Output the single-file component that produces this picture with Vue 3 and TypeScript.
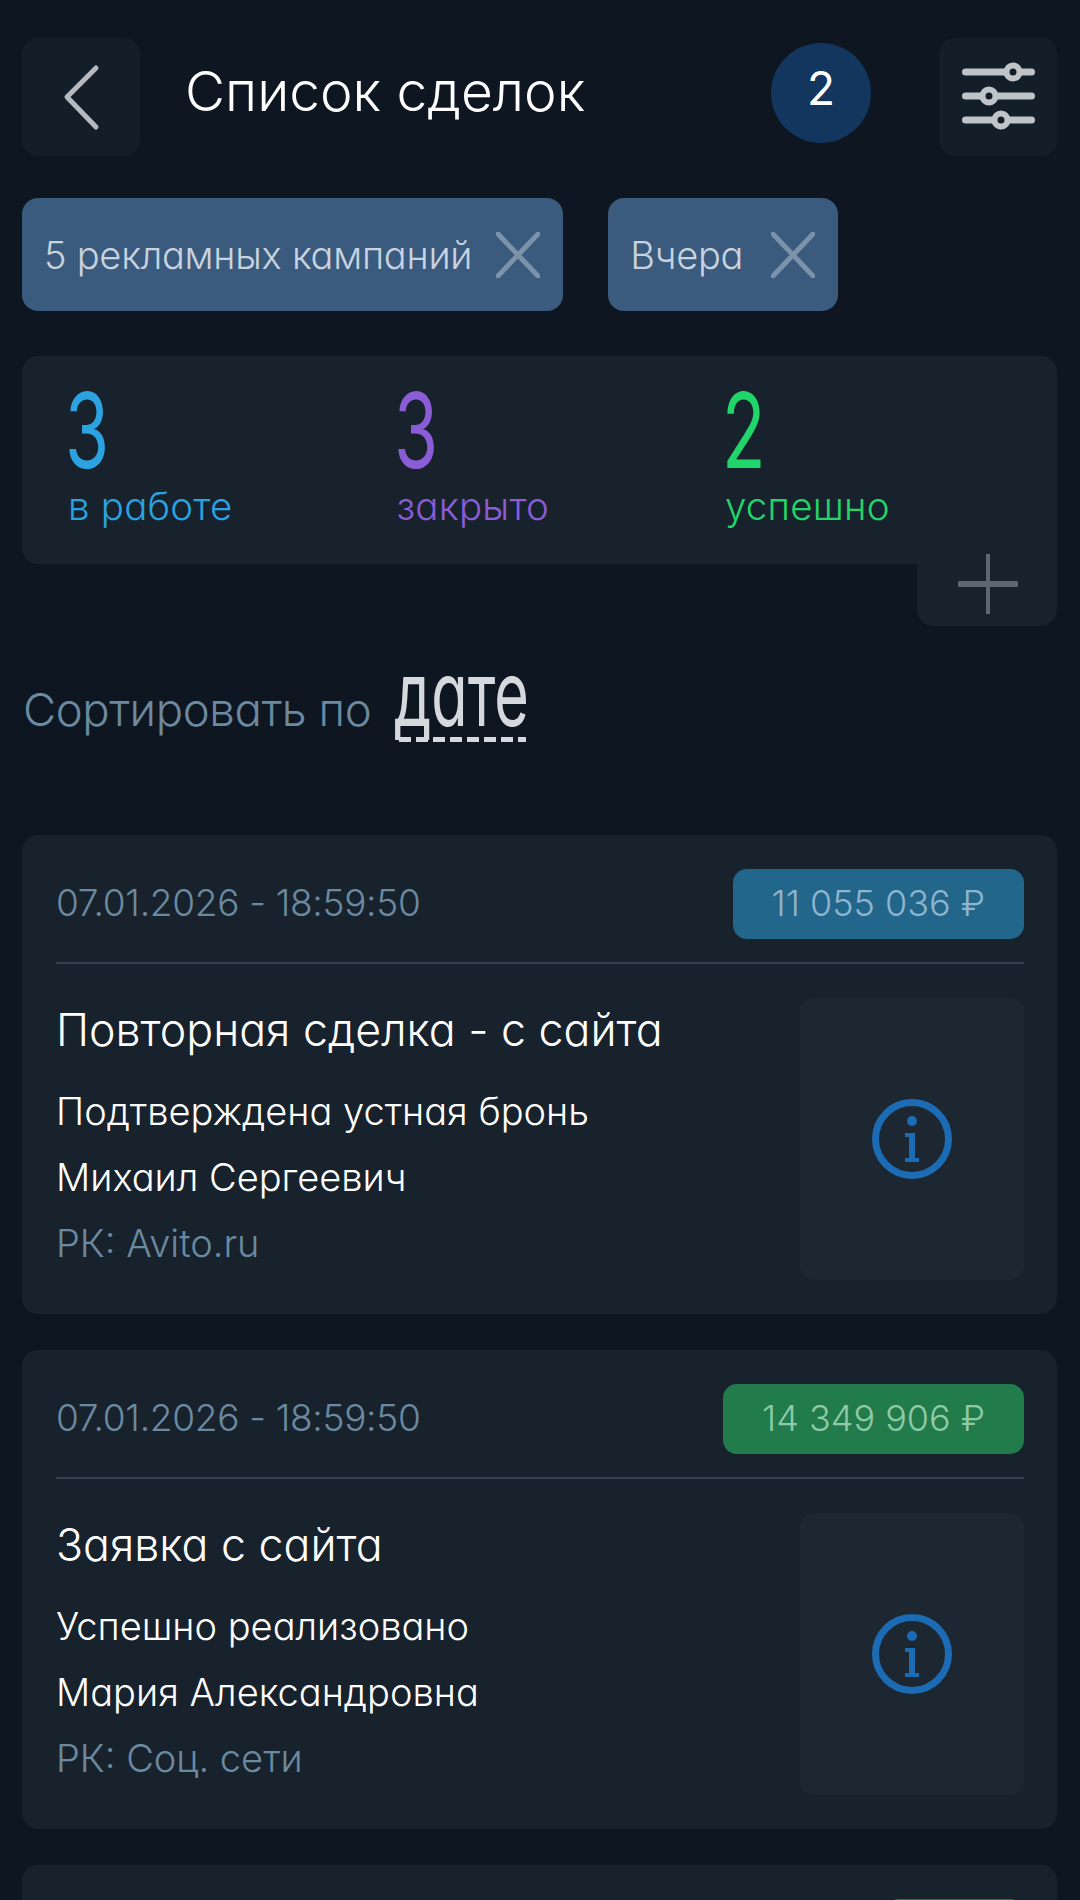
<script setup lang="ts">
interface Deal {
  date: string
  sum: string
  tone: string
  title: string
  status: string
  manager: string
  source: string
}

const filters = ['5 рекламных кампаний', 'Вчера']

const stats = [
  { value: 3, label: 'в работе', tone: 'blue' },
  { value: 3, label: 'закрыто', tone: 'violet' },
  { value: 2, label: 'успешно', tone: 'green' }
]

const deals: Deal[] = [
  {
    date: '07.01.2026 - 18:59:50',
    sum: '11 055 036 ₽',
    tone: 'work',
    title: 'Повторная сделка - с сайта',
    status: 'Подтверждена устная бронь',
    manager: 'Михаил Сергеевич',
    source: 'РК: Avito.ru'
  },
  {
    date: '07.01.2026 - 18:59:50',
    sum: '14 349 906 ₽',
    tone: 'done',
    title: 'Заявка с сайта',
    status: 'Успешно реализовано',
    manager: 'Мария Александровна',
    source: 'РК: Соц. сети'
  }
]
</script>

<template>
  <div class="page">
    <header class="top">
      <button class="square">
        <svg width="118" height="118" viewBox="0 0 118 118">
          <path d="M74 30 L45 59 L74 89" fill="none" stroke="#b4babf" stroke-width="5" stroke-linecap="round" stroke-linejoin="round" />
        </svg>
      </button>
      <h1 class="title">Список сделок</h1>
      <span class="count">2</span>
      <button class="square">
        <svg width="118" height="118" viewBox="0 0 118 118">
          <g stroke="#bfc4c9" stroke-width="7" stroke-linecap="round">
            <path d="M26.500 34 H92.500" />
            <path d="M26.500 58 H92.500" />
            <path d="M26.500 82 H92.500" />
          </g>
          <g fill="#141e28" stroke="#bfc4c9" stroke-width="6">
            <circle cx="74" cy="34" r="6.500" />
            <circle cx="50" cy="58" r="6.500" />
            <circle cx="62" cy="82" r="6.500" />
          </g>
        </svg>
      </button>
    </header>

    <div class="chips">
      <div v-for="f in filters" :key="f" class="chip">
        <span>{{ f }}</span>
        <svg width="44" height="46" viewBox="0 0 44 46">
          <path d="M2 2 L42 44 M42 2 L2 44" stroke="#7b92aa" stroke-width="5" stroke-linecap="round" />
        </svg>
      </div>
    </div>

    <section class="stats">
      <div v-for="s in stats" :key="s.tone" class="stat" :class="s.tone">
        <span class="stat-value">{{ s.value }}</span>
        <span class="stat-label">{{ s.label }}</span>
      </div>
    </section>
    <div class="add-row">
      <button class="add">
        <svg width="60" height="60" viewBox="0 0 60 60">
          <path d="M30 0 V60" stroke="#5d6770" stroke-width="4" stroke-linecap="round" />
          <path d="M2 30 H58" stroke="#5d6770" stroke-width="6" stroke-linecap="round" />
        </svg>
      </button>
    </div>

    <div class="sort">
      <span class="sort-label">Сортировать по</span>
      <span class="sort-value"><span class="sort-word">дате</span></span>
    </div>

    <article v-for="(d, i) in deals" :key="i" class="deal">
      <div class="deal-head">
        <span class="deal-date">{{ d.date }}</span>
        <span class="deal-sum" :class="d.tone">{{ d.sum }}</span>
      </div>
      <div class="deal-body">
        <div class="deal-text">
          <div class="deal-title">{{ d.title }}</div>
          <div class="deal-line">{{ d.status }}</div>
          <div class="deal-line">{{ d.manager }}</div>
          <div class="deal-line muted">{{ d.source }}</div>
        </div>
        <div class="deal-info">
          <svg width="80" height="80" viewBox="0 0 80 80">
            <circle cx="40" cy="40" r="36.500" fill="none" stroke="#1c6cb5" stroke-width="7" />
            <circle cx="40" cy="22" r="5" fill="#1c6cb5" />
            <path d="M33 34 H43 V59 H47 V63 H33 V59 H37 V38 H33 Z" fill="#1c6cb5" />
          </svg>
        </div>
      </div>
    </article>

    <!-- next card, only its top edge fits on the screen -->
    <article class="deal">
      <div class="deal-head">
        <span></span>
        <span class="deal-sum done next"></span>
      </div>
    </article>
  </div>
</template>

<style scoped>
.page {
  height: 1900px;
  overflow: hidden;
  box-sizing: border-box;
  padding: 38px 23px 0 22px;
  background: #0e1621;
  font-family: Inter, "Noto Sans", sans-serif;
  font-feature-settings: "cv11";
  font-weight: 300;
  color: #fff;
}

button {
  border: none;
  padding: 0;
  display: block;
}

.top {
  display: flex;
  align-items: center;
  height: 118px;
}

.square {
  width: 118px;
  height: 118px;
  border-radius: 16px;
  background: #141e28;
}

.title {
  margin: 0 0 12px 45px;
  flex: 1;
  font-size: 55px;
  font-weight: 300;
  line-height: 64px;
}

.count {
  width: 100px;
  height: 100px;
  margin: 0 68px 8px 0;
  box-sizing: border-box;
  padding-bottom: 10px;
  border-radius: 50%;
  background: #12365e;
  display: flex;
  align-items: center;
  justify-content: center;
  font-size: 46px;
  font-weight: 400;
}

.chips {
  display: flex;
  gap: 45px;
  margin-top: 42px;
}

.chip {
  height: 113px;
  min-width: 230px;
  box-sizing: border-box;
  display: flex;
  align-items: center;
  justify-content: space-between;
  gap: 24px;
  padding: 0 23px 0 22px;
  border-radius: 16px;
  background: #3a5a7e;
  color: #c8d3df;
  font-size: 38px;
  letter-spacing: -0.25px;
}

.stats {
  margin-top: 45px;
  height: 208px;
  box-sizing: border-box;
  padding: 25px 0 0 46px;
  display: grid;
  grid-template-columns: repeat(3, 328.500px);
  background: #18222d;
  border-radius: 16px 16px 0 16px;
}

.stat {
  display: flex;
  flex-direction: column;
  align-items: flex-start;
}

.stat-value {
  font-size: 105px;
  line-height: 100px;
  font-weight: 400;
  margin: -1px 0 1px -3px;
  transform: scaleX(0.68);
  transform-origin: left center;
}

.stat-label {
  font-size: 38.500px;
  line-height: 44px;
  margin-top: 3px;
  letter-spacing: 0.2px;
}

.blue { color: #2ba3e0; }
.violet { color: #8a5cd6; }
.green { color: #20d569; }

.add-row {
  display: flex;
  justify-content: flex-end;
}

.add {
  position: relative;
  width: 140px;
  height: 62px;
  background: #18222d;
  border-radius: 0 0 16px 16px;
}

.add svg {
  position: absolute;
  left: 41px;
  top: -10px;
}

.sort {
  display: flex;
  align-items: baseline;
  gap: 23px;
  padding: 20px 0 0 1px;
  height: 209px;
  box-sizing: border-box;
}

.sort-label {
  font-size: 45.500px;
  color: #6b8aa0;
  letter-spacing: -0.4px;
}

.sort-value {
  display: inline-block;
  width: 137px;
  background: repeating-linear-gradient(90deg, #d5d8dc 0 12px, transparent 12px 17px) 5px 100% / 127px 5px no-repeat;
}

.sort-word {
  display: inline-block;
  font-size: 90px;
  line-height: 96px;
  font-weight: 400;
  color: #d5d8dc;
  transform: scaleX(0.66);
  transform-origin: left center;
}

.deal {
  height: 479px;
  box-sizing: border-box;
  margin-bottom: 36px;
  padding: 35px 33px 0 34px;
  border-radius: 16px;
  background: #18222d;
}

.deal-head {
  display: flex;
  align-items: center;
  justify-content: space-between;
  height: 94px;
  padding-bottom: 24px;
  box-sizing: border-box;
  border-bottom: 2px solid #333f4b;
}

.deal-date {
  font-size: 37px;
  color: #6b8aa0;
  letter-spacing: -0.3px;
  margin-bottom: 4px;
}

.deal-sum {
  height: 70px;
  box-sizing: border-box;
  display: flex;
  align-items: center;
  padding: 0 39px 3px;
  border-radius: 14px;
  font-size: 36px;
}

.deal-sum.work {
  background: #22668c;
  color: #8fb5cc;
}

.deal-sum.done {
  background: #217b4a;
  color: #8fc9a8;
}

.deal-sum.next {
  width: 139px;
}

.deal-body {
  display: flex;
  justify-content: space-between;
  padding-top: 34px;
}

.deal-title {
  font-size: 44.700px;
  line-height: 52px;
  margin-top: 6px;
  margin-bottom: 22px;
}

.deal-line {
  font-size: 38px;
  line-height: 66px;
}

.muted {
  color: #6b8aa0;
}

.deal-info {
  width: 224px;
  height: 282px;
  border-radius: 14px;
  background: #1c2731;
  display: flex;
  align-items: center;
  justify-content: center;
}
</style>

<style>
body {
  background: #0e1621;
}
</style>
